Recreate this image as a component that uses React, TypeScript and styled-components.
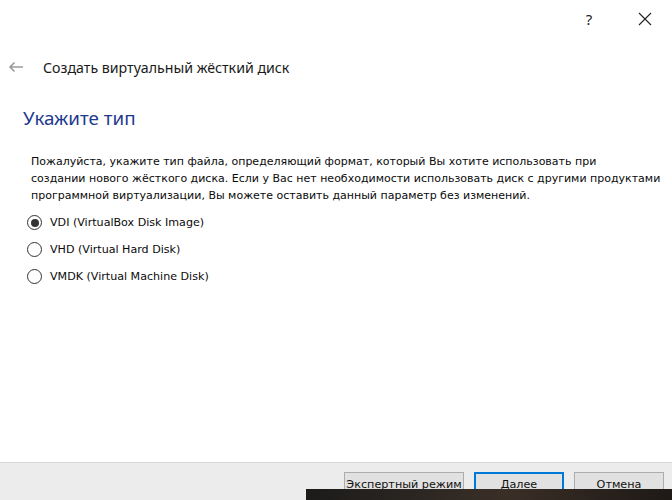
import React, { useState } from 'react';
import styled, { createGlobalStyle } from 'styled-components';

const GlobalStyle = createGlobalStyle`
  html, body {
    margin: 0;
    padding: 0;
    background: #ffffff;
  }
`;

const options = [
  { id: 'vdi', label: 'VDI (VirtualBox Disk Image)' },
  { id: 'vhd', label: 'VHD (Virtual Hard Disk)' },
  { id: 'vmdk', label: 'VMDK (Virtual Machine Disk)' },
];

const App = () => {
  const [selected, setSelected] = useState('vdi');

  return (
    <>
      <GlobalStyle />
      <Window>
        <TitleBar>
          <CaptionButton>?</CaptionButton>
          <CaptionButton>
            <svg width="14" height="14" viewBox="0 0 14 14">
              <path d="M1 1 L13 13 M13 1 L1 13" stroke="#222" strokeWidth="1.1" fill="none" />
            </svg>
          </CaptionButton>
        </TitleBar>

        <Header>
          <BackButton>
            <svg width="16" height="12" viewBox="0 0 16 12">
              <path d="M15 6 H2 M6.5 1.5 L2 6 L6.5 10.5" stroke="#9a9a9a" strokeWidth="1.6" fill="none" />
            </svg>
          </BackButton>
          <WizardTitle>Создать виртуальный жёсткий диск</WizardTitle>
        </Header>

        <Content>
          <PageHeading>Укажите тип</PageHeading>
          <Description>
            Пожалуйста, укажите тип файла, определяющий формат, который Вы хотите использовать при
            <br />
            создании нового жёсткого диска. Если у Вас нет необходимости использовать диск с другими продуктами
            <br />
            программной виртуализации, Вы можете оставить данный параметр без изменений.
          </Description>
          <RadioList>
            {options.map((o) => (
              <RadioRow key={o.id} onClick={() => setSelected(o.id)}>
                <RadioCircle $checked={selected === o.id} />
                <RadioLabel>{o.label}</RadioLabel>
              </RadioRow>
            ))}
          </RadioList>
        </Content>

        <Footer>
          <Button $width={120}>Экспертный режим</Button>
          <Button $width={90} $default>Далее</Button>
          <Button $width={90}>Отмена</Button>
        </Footer>

        <Taskbar />
      </Window>
    </>
  );
};

export default App;

const Window = styled.div`
  position: relative;
  width: 672px;
  height: 500px;
  overflow: hidden;
  background: #ffffff;
  display: flex;
  flex-direction: column;
`;

const TitleBar = styled.div`
  height: 37px;
  display: flex;
  justify-content: flex-end;
  align-items: center;
  padding-right: 4px;
`;

const CaptionButton = styled.div`
  width: 46px;
  height: 30px;
  display: flex;
  align-items: center;
  justify-content: center;
  font-family: 'Noto Sans', sans-serif;
  font-size: 15px;
  color: #222;
  margin-left: 10px;
`;

const Header = styled.div`
  display: flex;
  align-items: center;
  height: 24px;
  margin-top: 18px;
`;

const BackButton = styled.div`
  width: 43px;
  padding-left: 8px;
  box-sizing: border-box;
  display: flex;
  align-items: center;
`;

const WizardTitle = styled.div`
  font-family: 'Noto Sans', sans-serif;
  font-size: 14.2px;
  color: #1a1a1a;
`;

const Content = styled.div`
  flex: 1;
  padding: 0 8px 0 23px;
`;

const PageHeading = styled.h1`
  margin: 26px 0 0 0;
  font-family: 'Noto Sans', sans-serif;
  font-weight: 400;
  font-size: 18.8px;
  line-height: 26px;
  color: #1e3a8f;
`;

const Description = styled.p`
  margin: 22px 0 0 8px;
  font-family: 'DejaVu Sans', sans-serif;
  font-size: 11px;
  line-height: 17px;
  color: #0a0a0a;
  white-space: nowrap;
`;

const RadioList = styled.div`
  margin: 5px 0 0 4px;
  display: flex;
  flex-direction: column;
`;

const RadioRow = styled.div`
  height: 27px;
  display: flex;
  align-items: center;
  cursor: default;
`;

const RadioCircle = styled.span<{ $checked: boolean }>`
  width: 13px;
  height: 13px;
  border: 1px solid #333;
  border-radius: 50%;
  background: #fff;
  display: flex;
  align-items: center;
  justify-content: center;
  margin-right: 8px;

  &::after {
    content: '';
    width: 8px;
    height: 8px;
    border-radius: 50%;
    background: #333;
    display: ${(p) => (p.$checked ? 'block' : 'none')};
  }
`;

const RadioLabel = styled.span`
  font-family: 'DejaVu Sans', sans-serif;
  font-size: 11.1px;
  color: #0a0a0a;
`;

const Footer = styled.div`
  height: 38px;
  border-top: 1px solid #d8d8d8;
  background: #ececec;
  display: flex;
  justify-content: flex-end;
  align-items: flex-start;
  gap: 10px;
  padding: 9px 8px 0 0;
  box-sizing: border-box;
`;

const Button = styled.div<{ $width: number; $default?: boolean }>`
  width: ${(p) => p.$width}px;
  height: 24px;
  box-sizing: border-box;
  border: ${(p) => (p.$default ? '2px solid #0078d7' : '1px solid #adadad')};
  background: #e1e1e1;
  display: flex;
  align-items: center;
  justify-content: center;
  white-space: nowrap;
  font-family: 'DejaVu Sans', sans-serif;
  font-size: 11.2px;
  color: #111;
`;

const Taskbar = styled.div`
  position: absolute;
  left: 306px;
  right: 0;
  bottom: 0;
  height: 11px;
  background: linear-gradient(90deg, #1c1b1a 0%, #2b2622 30%, #3a2f27 55%, #2a221d 80%, #1e1a17 100%);
`;
